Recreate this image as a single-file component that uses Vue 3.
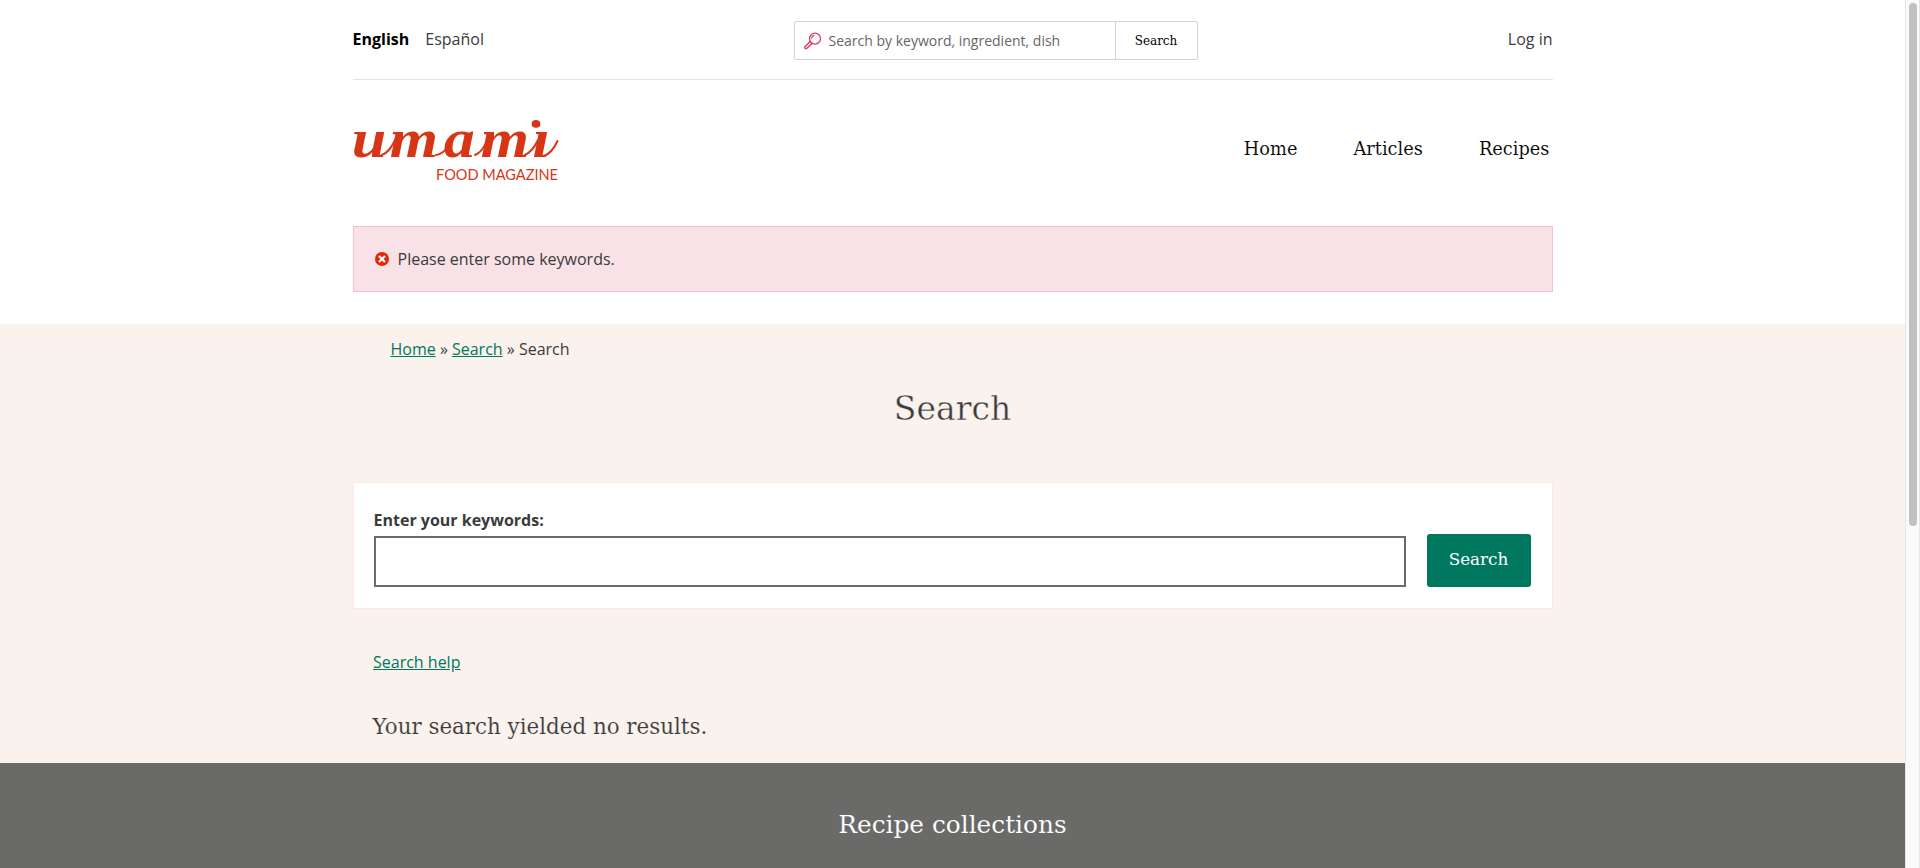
<script setup>
const nav = ['Home', 'Articles', 'Recipes']
</script>

<template>
  <div class="window">
    <div class="page">
      <header class="wrap">
        <div class="topbar">
          <nav class="langs"><b>English</b><a>Español</a></nav>
          <form class="quick" @submit.prevent>
            <div class="quick-field">
              <svg width="18" height="18" viewBox="0 0 18 18" fill="none" stroke="#da3c66" stroke-width="1.3">
                <circle cx="11" cy="6.6" r="5.5" />
                <path d="M7.2 6.3 A4 4 0 0 1 10.5 3.4 M7.7 5.2L9.7 3.4" />
                <path d="M7 10.5 L5.7 9.8 L.9 15 Q.5 15.7 1.2 16.4 Q1.9 17 2.6 16.4 L7.7 11.8 Z" />
              </svg>
              <span>Search by keyword, ingredient, dish</span>
            </div>
            <button class="slab quick-btn"><span>Search</span></button>
          </form>
          <a class="login">Log in</a>
        </div>
        <div class="brand">
          <svg class="logo" width="206" height="62" viewBox="0 0 206 62" fill="#d63616">
            <text class="word" x="-1 32 79 111 156" y="37" transform="scale(1.15 1)">umamı</text>
            <ellipse cx="183" cy="3.900" rx="4.4" ry="3.8" />
            <g fill="none" stroke="#d63616" stroke-width="2" stroke-linecap="round">
              <path d="M29 35 Q37 32 43 18" />
              <path d="M83 35 Q90 34 96 26" />
              <path d="M122 35 Q130 32 135 18" />
              <path d="M172 35 Q180 31 185 20" />
              <path d="M191 36 Q199 33 204.500 21" />
            </g>
            <text class="tag" x="83" y="60" textLength="122" lengthAdjust="spacingAndGlyphs">FOOD MAGAZINE</text>
          </svg>
          <nav class="menu slab"><a v-for="n in nav" :key="n">{{ n }}</a></nav>
        </div>
        <div class="alert">
          <svg width="14" height="14" viewBox="0 0 14 14">
            <circle cx="7" cy="7" r="7" fill="#e32700" />
            <path d="M4 4L10 10M10 4L4 10" stroke="#fff" stroke-width="2.2" />
          </svg>
          <span>Please enter some keywords.</span>
        </div>
      </header>
      <main>
        <div class="wrap">
          <div class="crumbs"><a>Home</a> » <a>Search</a> » Search</div>
          <h1 class="slab"><span>Search</span></h1>
          <form class="panel" @submit.prevent>
            <label>
              <span>Enter your keywords:</span>
              <input type="text">
            </label>
            <button class="slab"><span>Search</span></button>
          </form>
          <a class="help">Search help</a>
          <h3 class="slab"><span>Your search yielded no results.</span></h3>
        </div>
      </main>
      <footer><h2 class="slab"><span>Recipe collections</span></h2></footer>
    </div>
    <div class="scroll"><div class="thumb"></div></div>
  </div>
</template>

<style>
html, body { overflow: hidden; }
</style>

<style scoped>
* { box-sizing: border-box; }
.window { display: flex; width: 1920px; height: 868px; overflow: hidden; background: #fff; color: #3b3b3b; font: 16px/24px "Open Sans", "Noto Sans", sans-serif; }
.page { width: 1905px; display: flex; flex-direction: column; }
.wrap { width: 1200px; margin: 0 auto; }
.slab { font-family: "DejaVu Serif", serif; font-weight: 400; }
header { height: 324px; flex: none; }
.topbar { height: 80px; border-bottom: 1px solid #e4e4da; display: grid; grid-template-columns: 441px 404px 355px; align-items: start; }
.langs { display: flex; gap: 16px; padding-top: 27px; }
.langs b { color: #000; }
.quick { display: flex; padding-top: 21px; }
.quick-field { width: 322px; height: 39px; border: 1px solid #d2d2d2; border-radius: 2px 0 0 2px; display: flex; align-items: center; padding-left: 9px; font-size: 14px; color: #666; }
.quick-field span { margin-left: 7px; padding-top: 1px; }
.quick-btn { width: 83px; height: 39px; margin-left: -1px; padding: 0; border: 1px solid #d2d2d2; border-radius: 2px; background: #fff; color: #000; font-size: 12px; }
.login { text-align: right; padding-top: 27px; }
.brand { height: 146px; display: flex; justify-content: space-between; }
.logo { margin-top: 40px; overflow: visible; }
.word { font: italic bold 54px "Liberation Serif", serif; }
.tag { font: 15.500px Lato, sans-serif; }
.menu { display: flex; gap: 56px; padding: 57px 3px 0 0; color: #000; font-size: 17.800px; -webkit-text-stroke: .12px #fff; }
.alert { height: 66px; border: 1px solid #f9bfcd; background: #f8e1e7; display: flex; align-items: center; padding-left: 21px; gap: 9px; }
main { height: 439px; flex: none; background: #faf2ec; }
.crumbs { padding: 13px 0 0 38px; }
.crumbs a, .help { color: #00785f; text-decoration: underline; }
h1 { margin: 23px 0 0; font-size: 33px; line-height: 50px; text-align: center; -webkit-text-stroke: .4px #faf2ec; }
.panel { height: 127px; margin-top: 48px; border: 1px solid #fde7df; background: #fff; display: flex; align-items: flex-end; gap: 21px; padding: 0 20px 21px; }
.panel label { width: 1032px; font-weight: 700; }
.panel label span { display: block; margin-bottom: 4px; }
.panel input { display: block; width: 100%; height: 51px; border: 2px solid #6b6b6b; background: #fff; outline: 0; }
.panel button { width: 104px; height: 53px; padding: 0 0 3px; border: 0; border-radius: 3px; background: #00785f; color: #fff; font-size: 16.800px; }
.help { display: block; width: max-content; margin: 41px 0 0 20.500px; }
h3 { margin: 36px 0 0 20px; font-size: 21.400px; line-height: 34px; -webkit-text-stroke: .12px #faf2ec; }
footer { flex: 1; background: #6a6a68; }
h2 { margin: 42px 0 0; color: #fff; font-size: 24.800px; line-height: 40px; text-align: center; -webkit-text-stroke: .12px #6a6a68; }
.scroll { width: 15px; background: #fafafa; border: solid #e6e6e6; border-width: 0 1px; padding: 3px 0 0 3px; }
.thumb { width: 8px; height: 523px; border-radius: 4px; background: #c1c1c1; }
</style>
